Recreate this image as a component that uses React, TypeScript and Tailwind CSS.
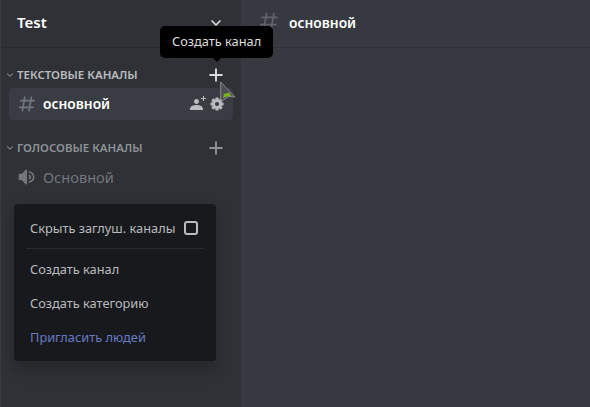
import { ChevronDown, Plus } from 'lucide-react'

const hashPath = 'M5.88657 21C5.57547 21 5.3399 20.7189 5.39427 20.4126L6.00001 17H2.59511C2.28449 17 2.04905 16.7198 2.10259 16.4138L2.27759 15.4138C2.31946 15.1746 2.52722 15 2.77011 15H6.35001L7.41001 9H4.00511C3.69449 9 3.45905 8.71977 3.51259 8.41381L3.68759 7.41381C3.72946 7.17456 3.93722 7 4.18011 7H7.76001L8.39677 3.41262C8.43914 3.17391 8.64664 3 8.88907 3H9.87344C10.1845 3 10.4201 3.28107 10.3657 3.58738L9.76001 7H15.76L16.3968 3.41262C16.4391 3.17391 16.6466 3 16.8891 3H17.8734C18.1845 3 18.4201 3.28107 18.3657 3.58738L17.76 7H21.1649C21.4755 7 21.711 7.28023 21.6574 7.58619L21.4824 8.58619C21.4406 8.82544 21.2328 9 20.9899 9H17.41L16.35 15H19.7549C20.0655 15 20.301 15.2802 20.2474 15.5862L20.0724 16.5862C20.0306 16.8254 19.8228 17 19.5799 17H16L15.3632 20.5874C15.3209 20.8261 15.1134 21 14.8709 21H13.8866C13.5755 21 13.3399 20.7189 13.3943 20.4126L14 17H8.00001L7.36325 20.5874C7.32088 20.8261 7.11337 21 6.87094 21H5.88657ZM9.41045 9L8.35045 15H14.3504L15.4104 9H9.41045Z'

function HashIcon({ size, className }: { size: number; className?: string }) {
  return (
    <svg width={size} height={size} viewBox="0 0 24 24" className={className}>
      <path fill="currentColor" fillRule="evenodd" d={hashPath} />
    </svg>
  )
}

function SpeakerIcon() {
  return (
    <svg width="20" height="20" viewBox="0 0 24 24" className="text-[#72767d]">
      <path fill="currentColor" d="M11.383 3.07904C11.009 2.92504 10.579 3.01004 10.293 3.29604L6 8.00204H3C2.45 8.00204 2 8.45304 2 9.00204V15.002C2 15.552 2.45 16.002 3 16.002H6L10.293 20.71C10.579 20.996 11.009 21.082 11.383 20.927C11.757 20.772 12 20.407 12 20.002V4.00204C12 3.59904 11.757 3.23204 11.383 3.07904ZM14 5.00195V7.00195C16.757 7.00195 19 9.24595 19 12.002C19 14.759 16.757 17.002 14 17.002V19.002C17.86 19.002 21 15.863 21 12.002C21 8.14295 17.86 5.00195 14 5.00195ZM14 9.00195C15.654 9.00195 17 10.349 17 12.002C17 13.657 15.654 15.002 14 15.002V13.002C14.551 13.002 15 12.553 15 12.002C15 11.451 14.551 11.002 14 11.002V9.00195Z" />
    </svg>
  )
}

function InviteIcon() {
  return (
    <svg width="16" height="16" viewBox="0 0 16 16" className="text-[#b9bbbe]">
      <path fill="currentColor" d="M14 2H16V3H14V5H13V3H11V2H13V0H14V2Z" />
      <path fill="currentColor" d="M6.5 8.00667C7.88 8.00667 9 6.88667 9 5.50667C9 4.12667 7.88 3.00667 6.5 3.00667C5.12 3.00667 4 4.12667 4 5.50667C4 6.88667 5.12 8.00667 6.5 8.00667Z" />
      <path fill="currentColor" d="M6.5 8.99667C3.26 8.99667 0 10.6067 0 12.6667V14.0067H13V12.6667C13 10.6067 9.74 8.99667 6.5 8.99667Z" />
    </svg>
  )
}

function GearIcon() {
  return (
    <svg width="14" height="14" viewBox="0 0 16 16" className="text-[#b9bbbe]">
      {[0, 45, 90, 135].map((deg) => (
        <rect key={deg} x="6.2" y="0.5" width="3.6" height="15" rx="0.4" fill="currentColor" transform={`rotate(${deg} 8 8)`} />
      ))}
      <circle cx="8" cy="8" r="5.5" fill="currentColor" />
      <circle cx="8" cy="8" r="2.4" fill="#393c43" />
    </svg>
  )
}

function CategoryRow({ label, active }: { label: string; active?: boolean }) {
  return (
    <div className="flex h-[16px] items-center pr-[15px] pl-[4px]">
      <ChevronDown size={10} strokeWidth={2.5} className="shrink-0 text-[#8e9297]" />
      <span className={`ml-[2px] flex-1 text-[11.5px] leading-[16px] font-semibold ${active ? 'text-[#b9bbbe]' : 'text-[#8e9297]'}`}>
        {label}
      </span>
      <Plus size={20} strokeWidth={2.3} className={`shrink-0 ${active ? 'text-[#dcddde]' : 'text-[#8e9297]'}`} />
    </div>
  )
}

const menuRow = 'flex h-[34px] items-center pt-[2px] pl-[8px] text-[12.8px]'

export default function App() {
  return (
    <div className="flex h-[407px] w-[590px] overflow-hidden bg-[#36393f] font-['Noto_Sans',sans-serif]">
      <aside className="relative w-[241px] shrink-0 border-l border-[#3a3d43] bg-[#2f3136]">
        <header className="flex h-[48px] items-center justify-between border-b border-[#282a2e] pr-[17px] pb-[2px] pl-[16px]">
          <span className="text-[15px] font-semibold text-white">Test</span>
          <ChevronDown size={16} strokeWidth={2.5} className="text-[#dcddde]" />
        </header>

        <div className="pt-[19px]">
          <CategoryRow label="ТЕКСТОВЫЕ КАНАЛЫ" active />
          <div className="mt-[5px] ml-[8px] flex h-[32px] w-[224px] items-center rounded-[4px] bg-[#393c43] pr-[9px] pl-[8px]">
            <HashIcon size={20} className="shrink-0 text-[#72767d]" />
            <span className="ml-[6px] flex-1 text-[13.8px] font-semibold text-white">основной</span>
            <InviteIcon />
            <div className="ml-[4px]">
              <GearIcon />
            </div>
          </div>
        </div>

        <div className="pt-[20px]">
          <CategoryRow label="ГОЛОСОВЫЕ КАНАЛЫ" />
          <div className="mt-[5px] ml-[8px] flex h-[32px] items-center pl-[8px]">
            <SpeakerIcon />
            <span className="ml-[6px] pt-[2px] text-[14.6px] text-[#72767d]">Основной</span>
          </div>
        </div>

        <div className="mt-[11px] ml-[13px] w-[202px] rounded-[4px] bg-[#18191c] px-[8px] pt-[8px] pb-[7px] shadow-[0_8px_16px_rgba(0,0,0,0.24)]">
          <div className="flex h-[32px] items-center justify-between pr-[10px] pl-[8px] text-[12.8px] text-[#b9bbbe]">
            <span className="pt-[2px]">Скрыть заглуш. каналы</span>
            <span className="h-[14px] w-[14px] rounded-[3px] border-2 border-[#b9bbbe]" />
          </div>
          <div className="mx-[4px] mt-[4px] mb-[3px] h-px bg-[#2a2c31]" />
          <div className={`${menuRow} text-[#b9bbbe]`}>Создать канал</div>
          <div className={`${menuRow} text-[#b9bbbe]`}>Создать категорию</div>
          <div className={`${menuRow} text-[#677bc4]`}>Пригласить людей</div>
        </div>

        <div className="absolute top-[26px] left-[159px] flex h-[32px] items-center rounded-[5px] bg-black px-[12px] text-[12.8px] whitespace-nowrap text-[#dcddde]">
          Создать канал
          <div className="absolute -bottom-[4px] left-1/2 h-0 w-0 -translate-x-1/2 border-x-[5px] border-t-[5px] border-x-transparent border-t-black" />
        </div>

        <svg className="absolute top-[81px] left-[219px]" width="17" height="21" viewBox="0 0 17 21">
          <path d="M0.7 1 L15 16 L9 15.5 L2.5 19.5 L0.7 19 Z" fill="#4b4e54" stroke="#9a9c9f" strokeWidth="0.8" />
          <path d="M3 17 L4 13 L9 11.5 L11.5 15 L7 15.5 Z" fill="#7ab51d" />
        </svg>
      </aside>

      <main className="flex-1">
        <header className="flex h-[48px] items-center border-b border-[#2e3035] pl-[17px]">
          <HashIcon size={22} className="mb-[5px] text-[#5f6369]" />
          <span className="ml-[9px] text-[13.8px] font-semibold text-white">основной</span>
        </header>
      </main>
    </div>
  )
}
